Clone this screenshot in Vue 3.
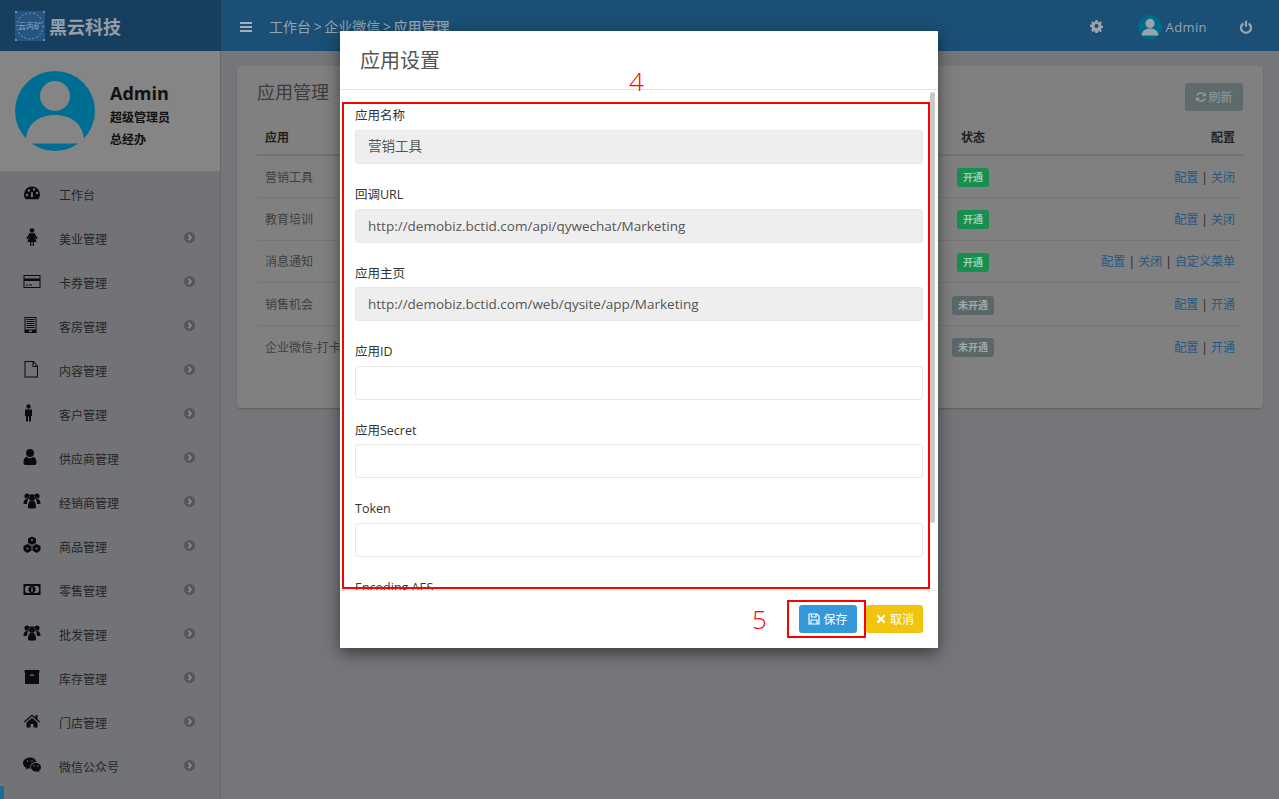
<template>
  <div class="page">
    <header class="header">
      <div class="brand">
        <svg class="logo" viewBox="0 0 30 30">
          <rect width="30" height="30" fill="#245583" />
          <path d="M0 0h2v2H0zM28 0h2v2h-2zM0 28h2v2H0zM28 28h2v2h-2z" fill="#76899b" />
          <circle cx="15" cy="15" r="13" fill="none" stroke="#8498ab" stroke-dasharray="2 2" />
          <text x="15" y="18" text-anchor="middle" class="logo-text">云丙矿</text>
        </svg>
        <span class="brand-name">黑云科技</span>
      </div>
      <div class="topbar">
        <svg class="menu-icon" viewBox="0 0 12 12"><path d="M0 1h12v2H0zM0 5h12v2H0zM0 9h12v2H0z" /></svg>
        <div class="crumbs">工作台 &gt; 企业微信 &gt; <b>应用管理</b></div>
        <div class="top-right">
          <svg class="gear" viewBox="0 0 14 14"><path fill-rule="evenodd" :d="gearPath" /></svg>
          <div class="top-user">
            <svg class="top-avatar" viewBox="0 0 24 24">
              <circle cx="12" cy="12" r="12" fill="#006a8d" />
              <circle cx="12" cy="8.400" r="4.600" fill="#9aa3aa" />
              <path d="M3.600 20.500c.3-4.800 3.800-7 8.400-7s8.100 2.200 8.400 7z" fill="#9aa3aa" />
            </svg>
            <span>Admin</span>
          </div>
          <svg class="power" viewBox="0 0 14 14"><path d="M5.900.8h2.200v6H5.900zM3.800 2.600l1.200 1.800a3.900 3.900 0 1 0 4 0l1.200-1.800a6.100 6.100 0 1 1-6.400 0z" /></svg>
        </div>
      </div>
    </header>

    <div class="main">
      <aside class="sidebar">
        <div class="profile">
          <svg class="avatar" viewBox="0 0 80 80">
            <circle cx="40" cy="40" r="40" fill="#006e93" />
            <circle cx="40" cy="25" r="15" fill="#858585" />
            <path d="M11 70c0-17 13-26 29-26s29 9 29 26c-.3.600-1 2-1.500 2.500H13c-1-1-1.700-2-2-2.500z" fill="#858585" />
          </svg>
          <div class="profile-info">
            <div class="profile-name">Admin</div>
            <div class="profile-line">超级管理员</div>
            <div class="profile-line">总经办</div>
          </div>
        </div>
        <nav class="nav">
          <a v-for="item in navItems" :key="item.label" class="nav-item">
            <svg class="nav-icon" viewBox="0 0 18 18"><path fill-rule="evenodd" :d="item.icon" /></svg>
            <span class="nav-label">{{ item.label }}</span>
            <svg v-if="item.arrow" class="nav-arrow" viewBox="0 0 11 11">
              <circle cx="5.500" cy="5.500" r="5.500" fill="#55565b" />
              <path d="M4.300 2.800l2.700 2.700-2.700 2.700" fill="none" stroke="#8a8b8f" stroke-width="1.800" />
            </svg>
          </a>
          <div class="nav-current"></div>
        </nav>
      </aside>

      <main class="content">
        <section class="card">
          <div class="card-head">
            <h2>应用管理</h2>
            <button class="refresh">
              <svg viewBox="0 0 12 12"><path d="M6 1.200c1.400 0 2.600.6 3.400 1.500L11 1.200v4.100H6.900l1.500-1.500A3.200 3.200 0 0 0 3 4.600H1.200A4.900 4.900 0 0 1 6 1.200zM1 6.700h4.100L3.600 8.200A3.200 3.200 0 0 0 9 7.400h1.800A4.900 4.900 0 0 1 2.600 9.300L1 10.800z" /></svg>
              刷新
            </button>
          </div>
          <table class="apps">
            <thead>
              <tr>
                <th>应用</th>
                <th class="col-status">状态</th>
                <th class="col-config">配置</th>
              </tr>
            </thead>
            <tbody>
              <tr v-for="app in apps" :key="app.name">
                <td>{{ app.name }}</td>
                <td class="col-status"><span class="badge" :class="{ off: !app.on }">{{ app.on ? '开通' : '未开通' }}</span></td>
                <td class="col-config">
                  <template v-for="(link, i) in app.links" :key="link">
                    <span v-if="i > 0" class="sep"> | </span><a>{{ link }}</a>
                  </template>
                </td>
              </tr>
            </tbody>
          </table>
        </section>
      </main>
    </div>

    <div class="modal">
      <div class="modal-title">应用设置</div>
      <div class="modal-body">
        <div v-for="field in fields" :key="field.label" class="field">
          <label>{{ field.label }}</label>
          <input type="text" :class="{ cjk: field.cjk }" :value="field.value" :disabled="field.readonly" />
        </div>
      </div>
      <div class="modal-foot">
        <button class="btn save">
          <svg viewBox="0 0 12 12" fill="none" stroke="#fff" stroke-width="1.200"><path d="M1 1h8l2 2v8H1zM3.500 1v3h4.500V1M3 11V7h6v4" /></svg>
          保存
        </button>
        <button class="btn cancel">
          <svg viewBox="0 0 12 12"><path d="M3.200 1.600L6 4.400l2.800-2.800 1.600 1.600L7.600 6l2.800 2.800-1.600 1.600L6 7.600l-2.800 2.800-1.600-1.600L4.400 6 1.600 3.200z" /></svg>
          取消
        </button>
      </div>
      <div class="scroll-thumb"></div>
      <div class="mark mark-body"></div>
      <div class="mark mark-save"></div>
      <span class="mark-num num-4">4</span>
      <span class="mark-num num-5">5</span>
    </div>
  </div>
</template>

<script setup>
const dot = (x, y, r) => `M${x - r} ${y}a${r} ${r} 0 1 0 ${r * 2} 0a${r} ${r} 0 1 0 ${-r * 2} 0z`

const gearPath =
  'M5.800 0h2.400l.3 1.900 1.300.5L11.400 1.300l1.500 1.700-1.100 1.500.5 1.300 1.700.3v2.400l-1.700.3-.5 1.300 1.100 1.500-1.500 1.700-1.600-1.100-1.300.5-.3 1.900H5.800l-.3-1.900-1.300-.5-1.600 1.100L1.100 10.600l1.100-1.500-.5-1.300L0 7.500V5.100l1.700-.3.5-1.300L1.100 3l1.500-1.700 1.600 1.100 1.300-.5z' +
  dot(7, 6.500, 2.200)

const usersIcon =
  dot(4, 4, 2.600) + dot(14, 4, 2.600) + dot(9, 5.500, 3.200) +
  'M.5 12c0-3 1-5 3.500-5 .6 0 1 .3 1.300.5-.9 1-1.300 2.600-1.300 4.500H.5zM17.500 12c0-3-1-5-3.500-5-.6 0-1 .3-1.300.5.9 1 1.300 2.600 1.300 4.500h3.500z' +
  'M5 15c0-4 1.300-6.500 4-6.500s4 2.500 4 6.500c0 .8-.6 1.500-1.500 1.500h-5C5.600 16.500 5 15.800 5 15z'

const navItems = [
  {
    label: '工作台', arrow: false,
    icon: 'M9 2.500a8 8 0 0 0-8 8c0 1.800.6 3.400 1.600 4.800h12.800c1-1.400 1.600-3 1.600-4.800a8 8 0 0 0-8-8z' +
      dot(4, 11, 1.200) + dot(6, 6.500, 1.200) + dot(11, 5.500, 1.200) + dot(14, 9, 1.200) + 'M8.200 8h1.400l.6 5H7.800z',
  },
  {
    label: '美业管理', arrow: true,
    icon: dot(9, 2.500, 2.300) + 'M6.300 5.200h5.400l3 5.300-1.300.8-2-3 2.300 5.700H10.800v4H9.600V14h-1.200v4H7.200v-4H4.300l2.300-5.700-2 3-1.300-.8z',
  },
  { label: '卡券管理', arrow: true, icon: 'M.5 3h17v13H.5zM1.500 4v2.500h15V4zM1.500 9v6h15V9zM3 12.500h2v1H3zM6 12.500h3v1H6z' },
  {
    label: '客房管理', arrow: true,
    icon: 'M1.500 1h12v16h-12zM2.500 2v11.500h10V2zM6 14.500V16h3v-1.500zM3.500 3h8v1h-8zM3.500 5h8v1h-8zM3.500 7h8v1h-8zM3.500 9h8v1h-8zM3.500 11h8v1h-8z',
  },
  { label: '内容管理', arrow: true, icon: 'M1.500 1h9l4.500 5v11.500H1.500zM2.500 2v14.500H14V7H9.500V2zM10.500 2.500V6h3.200z' },
  {
    label: '客户管理', arrow: true,
    icon: dot(5.500, 2.500, 2.200) + 'M2 5.500h7v6.500H8v5.500H6V12.500H5v5H3V12H2z',
  },
  {
    label: '供应商管理', arrow: true,
    icon: dot(7, 5, 4) + 'M.5 15c0-3.500 1.200-6 3.500-6 .9.800 1.900 1.200 3 1.200s2.100-.4 3-1.200c2.300 0 3.500 2.500 3.500 6 0 1-.8 2-2 2h-9c-1.200 0-2-1-2-2z',
  },
  { label: '经销商管理', arrow: true, icon: usersIcon },
  {
    label: '商品管理', arrow: true,
    icon: 'M9 .5l4 2v4.500l-4 2-4-2V2.500zM4.500 8l4 2v4.500l-4 2.500-4-2.500V10zM13.500 8l4 2v4.500l-4 2.500-4-2.500V10z' + dot(9, 4, 1) + dot(4.500, 12.500, 1) + dot(13.500, 12.500, 1),
  },
  {
    label: '零售管理', arrow: true,
    icon: 'M.5 4h17v11H.5zM3 6c0 .8-.5 1.500-1 1.500v4c.5 0 1 .7 1 1.500h12c0-.8.5-1.500 1-1.500v-4c-.5 0-1-.7-1-1.500z' +
      dot(9, 9.500, 3.600) + 'M8.300 7.500h1.400v4.200H8.300z',
  },
  { label: '批发管理', arrow: true, icon: usersIcon },
  { label: '库存管理', arrow: true, icon: 'M1.500 2h15v2.500h-.5V16H2V4.500h-.5zM7 6.500v1.200h4V6.500z' },
  {
    label: '门店管理', arrow: true,
    icon: 'M9 2.500l3.500 3V3h2v4.200L17 9.500l-.8.9L9 4.300 1.800 10.400l-.8-.9zM3.500 10.500L9 6l5.500 4.500V15.500H10.500v-3.500h-3v3.500h-4z',
  },
  {
    label: '微信公众号', arrow: true,
    icon: 'M7 1.500c3.300 0 6 2 6.300 4.500-3.500.1-6 2.400-6 5.200 0 .5.100.9.200 1.300H7c-.8 0-1.500-.1-2.200-.3L2.500 14l.6-2.200C1.200 10.700 0 9.100 0 7.200 0 4 3.100 1.500 7 1.500z' +
      'M13 7c2.800 0 5 1.800 5 4.200 0 1.400-.8 2.600-2 3.400l.4 1.800-2-1.100c-.4.100-.9.200-1.400.2-2.800 0-5-1.900-5-4.300S10.200 7 13 7z' +
      dot(4.600, 5, .8) + dot(9, 5, .8) + dot(11.200, 10, .7) + dot(14.800, 10, .7),
  },
]

const apps = [
  { name: '营销工具', on: true, links: ['配置', '关闭'] },
  { name: '教育培训', on: true, links: ['配置', '关闭'] },
  { name: '消息通知', on: true, links: ['配置', '关闭', '自定义菜单'] },
  { name: '销售机会', on: false, links: ['配置', '开通'] },
  { name: '企业微信-打卡', on: false, links: ['配置', '开通'] },
]

const fields = [
  { label: '应用名称', value: '营销工具', readonly: true, cjk: true },
  { label: '回调URL', value: 'http://demobiz.bctid.com/api/qywechat/Marketing', readonly: true },
  { label: '应用主页', value: 'http://demobiz.bctid.com/web/qysite/app/Marketing', readonly: true },
  { label: '应用ID', value: '' },
  { label: '应用Secret', value: '' },
  { label: 'Token', value: '' },
  { label: 'Encoding AES', value: '' },
]
</script>

<style>
html, body {
  margin: 0;
  overflow: hidden;
}
</style>

<style scoped>
.page {
  position: relative;
  width: 1279px;
  height: 799px;
  overflow: hidden;
  background: #75767a;
  font-family: "Open Sans", "Noto Sans CJK SC", sans-serif;
  font-size: 12px;
  color: #3f3f3f;
}

.header {
  display: flex;
  height: 51px;
  background: #1b4f75;
}

.brand {
  display: flex;
  align-items: center;
  gap: 4px;
  width: 221px;
  padding-left: 15px;
  box-sizing: border-box;
  background: #163f5f;
}

.logo {
  width: 30px;
  height: 30px;
}

.logo-text {
  font-size: 8px;
  fill: #94a5b5;
}

.brand-name {
  font-size: 18px;
  font-weight: 700;
  color: #949ea8;
}

.topbar {
  flex: 1;
  display: flex;
  align-items: center;
  padding: 2px 0 0 19px;
  box-sizing: border-box;
  color: #93a4b3;
}

.menu-icon {
  width: 12px;
  height: 12px;
  fill: #a3afba;
}

.crumbs {
  margin-left: 17px;
  margin-top: -2px;
  font-size: 14px;
  word-spacing: -1px;
}

.crumbs b {
  font-weight: 500;
}

.top-right {
  display: flex;
  align-items: center;
  margin-left: auto;
  padding-right: 26px;
}

.gear {
  width: 13px;
  height: 13px;
  fill: #98a3ac;
}

.top-user {
  display: flex;
  align-items: center;
  gap: 4px;
  margin-left: 35px;
  font-size: 13px;
  letter-spacing: 0.4px;
}

.top-avatar {
  width: 24px;
  height: 24px;
}

.power {
  width: 14px;
  height: 14px;
  margin-left: 32px;
  fill: #98a3ac;
}

.main {
  display: flex;
  height: 748px;
}

.sidebar {
  flex: none;
  width: 221px;
  box-sizing: border-box;
  border-right: 1px solid #68696d;
  overflow: hidden;
  background: #727377;
}

.profile {
  display: flex;
  align-items: center;
  gap: 15px;
  height: 120px;
  padding-left: 15px;
  background: #858585;
  border-bottom: 1px solid #78797c;
}

.avatar {
  width: 80px;
  height: 80px;
}

.profile-info {
  margin-top: 10px;
  color: #111;
  font-weight: 600;
}

.profile-name {
  font-size: 18px;
  font-weight: 700;
  line-height: 24px;
  margin-bottom: 2px;
}

.profile-line {
  line-height: 22px;
}

.nav-item {
  display: flex;
  align-items: center;
  height: 44px;
  padding-left: 23px;
  color: #252525;
}

.nav-icon {
  width: 18px;
  height: 18px;
  margin-top: -3px;
  fill: #0b0b0d;
}

.nav-label {
  margin-left: 18px;
  margin-top: 2px;
}

.nav-arrow {
  width: 11px;
  height: 11px;
  margin-left: auto;
  margin-right: 25px;
  margin-top: -2px;
}

.nav-current {
  width: 4px;
  height: 14px;
  margin-top: -2px;
  background: #1f6a99;
}

.content {
  flex: 1;
  padding: 15px 16px 0;
  box-sizing: border-box;
}

.card {
  padding: 17px 20px 40px;
  border-radius: 3px;
  background: #808080;
  box-shadow: 0 1px 2px rgba(0, 0, 0, 0.2);
}

.card-head {
  display: flex;
  align-items: flex-start;
  justify-content: space-between;
  height: 42px;
}

.card-head h2 {
  margin: 0;
  font-size: 18px;
  font-weight: 400;
  line-height: 18px;
  color: #3c3c3c;
}

.refresh {
  display: flex;
  align-items: center;
  justify-content: center;
  gap: 1px;
  width: 58px;
  height: 28px;
  padding: 0;
  border: none;
  border-radius: 3px;
  background: #5f6b6b;
  color: #8e9999;
  font: inherit;
}

.refresh svg {
  width: 12px;
  height: 12px;
  fill: #8e9999;
}

.apps {
  width: 100%;
  border-collapse: collapse;
  table-layout: fixed;
}

.apps th,
.apps td {
  box-sizing: border-box;
}

.apps th {
  height: 30px;
  padding: 0 8px 6px;
  border-bottom: 2px solid #737373;
  text-align: left;
  color: #1f1f1f;
  font-weight: 700;
}

.apps td {
  height: 42.6px;
  padding: 0 8px;
  border-bottom: 1px solid #767676;
}

.apps tbody tr:last-child td {
  border-bottom: none;
}

.apps .col-status {
  width: 80px;
  text-align: center;
}

.apps .col-config {
  width: 230px;
  text-align: right;
}

.apps a {
  color: #245a85;
}

.sep {
  color: #222;
  white-space: pre;
}

.badge {
  display: inline-block;
  padding: 0 6px;
  border-radius: 3px;
  background: #178f50;
  color: #9fcdb2;
  font-size: 10px;
  font-weight: 700;
  line-height: 19px;
  vertical-align: -2px;
}

.badge.off {
  background: #5c6767;
  color: #a0a8a8;
}

.modal {
  position: absolute;
  top: 31px;
  left: 340px;
  display: flex;
  flex-direction: column;
  width: 598px;
  height: 617px;
  background: #fff;
  box-shadow: 0 5px 15px rgba(0, 0, 0, 0.5);
}

.modal-title {
  flex: none;
  height: 58px;
  padding-left: 20px;
  border-bottom: 1px solid #e5e5e5;
  font-size: 20px;
  line-height: 60px;
  color: #555;
}

.modal-body {
  flex: none;
  height: 500px;
  box-sizing: border-box;
  padding: 15.4px 15px 0;
  overflow-y: hidden;
}

.scroll-thumb {
  position: absolute;
  top: 61px;
  left: 590px;
  width: 5px;
  height: 431px;
  border-radius: 3px;
  background: #c8c8c8;
}

.field {
  margin-bottom: 20px;
}

.field label {
  display: block;
  height: 24.6px;
  font-size: 12.5px;
  font-weight: 400;
  line-height: 22.5px;
  color: #333;
}

.field input {
  display: block;
  width: 100%;
  height: 34px;
  box-sizing: border-box;
  padding: 0 12px;
  border: 1px solid #e8e8e8;
  border-radius: 3px;
  outline: none;
  background: #fff;
  color: #555;
  font: inherit;
  font-size: 13.5px;
}

.field input.cjk {
  padding-bottom: 3px;
}

.field input:disabled {
  background: #eeeeee;
  opacity: 1;
  -webkit-text-fill-color: #555;
}

.modal-foot {
  display: flex;
  justify-content: flex-end;
  gap: 9px;
  padding: 14px 15px 0;
  border-top: 1px solid #eee;
}

.btn {
  display: flex;
  align-items: center;
  justify-content: center;
  gap: 3px;
  width: 58px;
  height: 28px;
  padding: 0;
  border: none;
  border-radius: 3px;
  color: #fff;
  font: inherit;
  font-weight: 400;
}

.btn svg {
  width: 12px;
  height: 12px;
  fill: #fff;
}

.btn.save svg {
  fill: none;
}

.btn.save {
  background: #3498db;
}

.btn.cancel {
  width: 57px;
  background: #f1c40f;
}

.mark {
  position: absolute;
  border: 2px solid #f00;
  box-sizing: border-box;
  pointer-events: none;
}

.mark-body {
  top: 71px;
  left: 2px;
  width: 588px;
  height: 487px;
}

.mark-save {
  top: 569px;
  left: 447px;
  width: 79px;
  height: 38px;
}

.mark-num {
  position: absolute;
  color: #f00;
  font-size: 26px;
  font-weight: 300;
  line-height: 30px;
}

.num-4 {
  top: 35px;
  left: 289px;
}

.num-5 {
  top: 573px;
  left: 412px;
}
</style>
